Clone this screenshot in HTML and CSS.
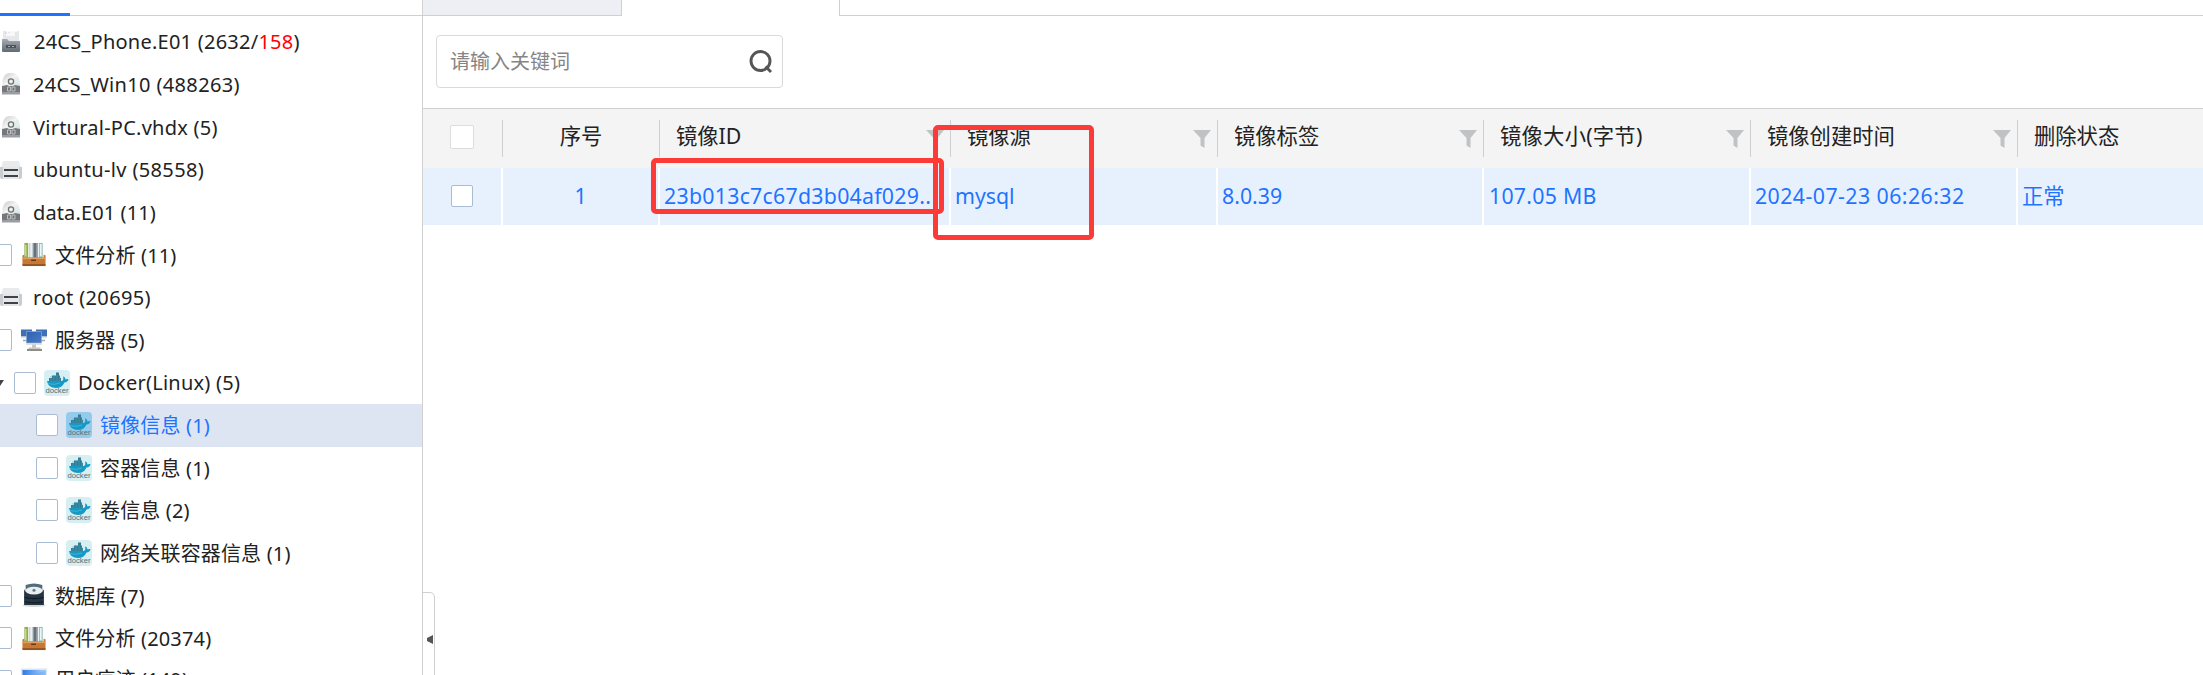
FILE: index.html
```html
<!DOCTYPE html>
<html lang="zh-CN">
<head>
<meta charset="utf-8">
<title>镜像信息</title>
<link rel="stylesheet" href="styles.css">
</head>
<body>
<svg width="0" height="0" class="defs">
  <defs>
    <linearGradient id="steel" x1="0" y1="0" x2="0" y2="1"><stop offset="0" stop-color="#a4abb1"/><stop offset="1" stop-color="#626a72"/></linearGradient>
    <linearGradient id="disc" x1="0" y1="0" x2="1" y2="1"><stop offset="0" stop-color="#c9c9c9"/><stop offset=".5" stop-color="#f4f4f4"/><stop offset="1" stop-color="#d2dcd8"/></linearGradient>
    <linearGradient id="screen" x1="0" y1="0" x2="1" y2="1"><stop offset="0" stop-color="#2c62b4"/><stop offset="1" stop-color="#4a7cc4"/></linearGradient>
    <linearGradient id="sky" x1="0" y1="0" x2="1" y2="0"><stop offset="0" stop-color="#2f7be6"/><stop offset="1" stop-color="#a9d3fa"/></linearGradient>
    <symbol id="floppy" viewBox="0 0 22 22">
      <path d="M3 0h16v11H3z" fill="#e6e8e9"/><path d="M6 0h11v5H6z" fill="#f8f8f8"/><path d="M6 1v2M9 1v1M16 1v4" stroke="#cfd2d4"/>
      <path d="M2 8h5l2 2h11v10q0 1-1 1H3q-1 0-1-1z" fill="url(#steel)"/><path d="M6 14h10v3H6z" fill="#4b535c"/><path d="M8 15.500h2M12 15.500h2" stroke="#a9b0b6"/>
    </symbol>
    <symbol id="cd" viewBox="0 0 22 22">
      <path d="M2 14Q2 4 6 1q5-2.500 10 0 4 3 4 13z" fill="url(#disc)"/><path d="M13 5l5-1 2 7-6-2z" fill="#e2efe9"/>
      <circle cx="11" cy="8.500" r="2.600" fill="#eee" stroke="#6c7074" stroke-width="1.300"/>
      <path d="M2 13l5-1 2 1h4l2-1 5 1v8H2z" fill="#74787c"/><path d="M2 19h18v2.500H2z" fill="#9a9ea2"/><path d="M7.500 14h3v4h-3zM12 14h3v4h-3z" fill="#777" stroke="#c4c6c8" stroke-width=".9"/>
    </symbol>
    <symbol id="disk" viewBox="0 0 22 22">
      <path d="M3 2h16l2 7H1z" fill="#e8eaec"/><path d="M0 8h22v10q0 2-2 2H2q-2 0-2-2z" fill="#c9cdd2"/><path d="M3 8h16v12H3z" fill="#e4e6e8"/><path d="M4 11h14M4 17h14" stroke="#3f4348" stroke-width="2.200"/>
    </symbol>
    <symbol id="files" viewBox="0 0 24 26">
      <path d="M2 1h4v16H2z" fill="#8faf4c"/><path d="M3.500 3v12" stroke="#e3edb9"/><path d="M7 1h4v16H7z" fill="#c3cccf"/><path d="M9 1v15" stroke="#f7f7f7" stroke-width="1.500"/><path d="M11 1h5v16h-5z" fill="#8c979d"/><path d="M13 1v15" stroke="#536168" stroke-width="1.400"/><path d="M17 1h4v16h-4z" fill="#8fb5b4"/><path d="M19 2v13" stroke="#ecf7f5" stroke-width="2"/>
      <path d="M0 14l2-1v3h20v-3l2 1v10H0z" fill="#c67836"/><path d="M0 17h24" stroke="#dda163" stroke-width="1.500"/><path d="M0 23h24v2H0z" fill="#96531f"/><path d="M9 19h5" stroke="#693816" stroke-width="1.500"/>
    </symbol>
    <symbol id="server" viewBox="0 0 26 24">
      <path d="M0 1h11v7H0zM15 1h11v7H15z" fill="#3f70b6"/><path d="M0 9h6M20 9h6" stroke="#dfe1e3" stroke-width="1.500"/><path d="M2 12h5M19 12h5" stroke="#a3a7aa" stroke-width="1.500"/><path d="M5.500 3h15v11.500h-15z" fill="url(#screen)" stroke="#8fa9cf" stroke-width=".7"/><path d="M5 15.500h16" stroke="#d5d7d9" stroke-width="1.500"/><path d="M11 16h4v3h4l2 3H6l2-3h3z" fill="#c9c8c5"/><path d="M6 21.500h15" stroke="#8f8d88" stroke-width="2"/>
    </symbol>
    <symbol id="whale" viewBox="0 0 26 26">
      <path d="M3 11h15q2-1 1-4.500 2 0 2.500 3 1.500-.8 3-.2-.6 3-4 3.200Q18 18 12 18q-8 0-9-7z" fill="#169ac5"/><path d="M5 8h12v3H5zM8 5.500h8v3H8zM12 2.500h3v3h-3z" fill="#347b94"/><path d="M7 6v5M10 5v6M13 5v6M16 7v4" stroke="#4baac5" stroke-width=".5"/><path d="M4 13.500q6 2 12-.5" stroke="#52bbd7" fill="none" stroke-width=".7"/>
      <text x="13" y="23" text-anchor="middle" textLength="23" lengthAdjust="spacingAndGlyphs" class="whale-word">docker</text>
    </symbol>
    <symbol id="database" viewBox="0 0 22 24">
      <ellipse cx="11" cy="21.500" rx="11" ry="1.500" fill="#d5d7d8"/><path d="M3 2q8-3 16 0v7H3z" fill="#536c7c"/><ellipse cx="11" cy="7.500" rx="8" ry="4" fill="#e9eef0"/><path d="M1.500 6q2 5 9.500 5t9.500-5v15h-19z" fill="#263541"/><path d="M2 14q9 2 18 0M2 18q9 2 18 0" stroke="#111d26" fill="none"/><circle cx="11" cy="7" r="1.500" fill="#667e8b"/>
    </symbol>
    <symbol id="desktop" viewBox="0 0 26 24"><path d="M0 0h26v20H0z" fill="#dbe5ef"/><path d="M1.500 1.500h23V20h-23z" fill="url(#sky)"/><path d="M1 9L25 2v18H1z" fill="#67a7f1" opacity=".5"/></symbol>
    <symbol id="funnel" viewBox="0 0 18 18"><path d="M0 0h18L11.500 8v10L7.500 15.500V8z" fill="#c0c2c4"/></symbol>
  </defs>
</svg>
<div class="app">
  <aside class="sidebar">
    <div class="side-tabs"><span class="side-tab"></span></div>
    <ul class="tree">
      <li class="row device"><svg class="dev"><use href="#floppy"/></svg><span class="label first">24CS_Phone.E01 (2632/<b class="alert">158</b>)</span></li>
      <li class="row device"><svg class="dev"><use href="#cd"/></svg><span class="label roomy">24CS_Win10 (488263)</span></li>
      <li class="row device"><svg class="dev"><use href="#cd"/></svg><span class="label">Virtural-PC.vhdx (5)</span></li>
      <li class="row device"><svg class="dev"><use href="#disk"/></svg><span class="label roomy">ubuntu-lv (58558)</span></li>
      <li class="row device"><svg class="dev"><use href="#cd"/></svg><span class="label snug">data.E01 (11)</span></li>
      <li class="row group"><i class="box"></i><svg class="ico"><use href="#files"/></svg><span class="label">文件分析 (11)</span></li>
      <li class="row device"><svg class="dev"><use href="#disk"/></svg><span class="label roomy">root (20695)</span></li>
      <li class="row group"><i class="box"></i><svg class="ico"><use href="#server"/></svg><span class="label">服务器 (5)</span></li>
      <li class="row sub"><svg class="caret" viewBox="0 0 4 6"><path d="M0 0h4L0 6z"/></svg><i class="box"></i><svg class="docker"><use href="#whale"/></svg><span class="label">Docker(Linux) (5)</span></li>
      <li class="row leaf selected"><i class="box"></i><svg class="docker"><use href="#whale"/></svg><span class="label">镜像信息 (1)</span></li>
      <li class="row leaf"><i class="box"></i><svg class="docker"><use href="#whale"/></svg><span class="label">容器信息 (1)</span></li>
      <li class="row leaf"><i class="box"></i><svg class="docker"><use href="#whale"/></svg><span class="label">卷信息 (2)</span></li>
      <li class="row leaf"><i class="box"></i><svg class="docker"><use href="#whale"/></svg><span class="label">网络关联容器信息 (1)</span></li>
      <li class="row group"><i class="box"></i><svg class="ico"><use href="#database"/></svg><span class="label">数据库 (7)</span></li>
      <li class="row group"><i class="box"></i><svg class="ico"><use href="#files"/></svg><span class="label">文件分析 (20374)</span></li>
      <li class="row group last"><i class="box"></i><svg class="ico"><use href="#desktop"/></svg><span class="label">用户痕迹 (149)</span></li>
    </ul>
  </aside>
  <main class="main">
    <div class="tabs"><span class="tab"></span><span class="tab active"></span><span class="tab-rest"></span></div>
    <div class="toolbar">
      <div class="search"><span class="hint">请输入关键词</span><svg class="lens" viewBox="0 0 24 24"><circle cx="11.500" cy="11" r="9.500"/><path d="M16.500 16.500l5.500 5.500"/></svg></div>
    </div>
    <div class="grid head">
      <div class="cell check"><i class="box"></i></div>
      <div class="cell num">序号</div>
      <div class="cell"><span>镜像ID</span><svg class="filter"><use href="#funnel"/></svg></div>
      <div class="cell"><span>镜像源</span><svg class="filter"><use href="#funnel"/></svg></div>
      <div class="cell"><span>镜像标签</span><svg class="filter"><use href="#funnel"/></svg></div>
      <div class="cell"><span class="size">镜像大小(字节)</span><svg class="filter"><use href="#funnel"/></svg></div>
      <div class="cell"><span>镜像创建时间</span><svg class="filter"><use href="#funnel"/></svg></div>
      <div class="cell"><span>删除状态</span></div>
    </div>
    <div class="grid data">
      <div class="cell check"><i class="box"></i></div>
      <div class="cell num">1</div>
      <div class="cell hash">23b013c7c67d3b04af029..</div>
      <div class="cell">mysql</div>
      <div class="cell">8.0.39</div>
      <div class="cell amount">107.05 MB</div>
      <div class="cell date">2024-07-23 06:26:32</div>
      <div class="cell">正常</div>
    </div>
  </main>
  <div class="collapse"><svg viewBox="0 0 6 9"><path d="M6 0v9L0 6V3z"/></svg></div>
  <div class="mark mark-id"></div>
  <div class="mark mark-source"></div>
</div>
</body>
</html>
```
FILE: styles.css
```css
* { box-sizing: border-box; }
body { margin: 0; background: #fff; color: #222; font: 20px/28px "Noto Sans", "Noto Sans CJK SC", sans-serif; }
svg { display: block; flex: none; }
.defs { position: absolute; }
.app { position: relative; display: flex; width: 2203px; height: 675px; overflow: hidden; }
.sidebar { flex: none; width: 423px; height: 675px; overflow: hidden; border-right: 1px solid #d0d0d0; }
.side-tabs { height: 16px; border-bottom: 1px solid #d0d0d0; display: flex; align-items: flex-end; }
.side-tab { width: 70px; height: 3px; margin-bottom: -1px; background: #1f74ff; }
.tree { list-style: none; margin: 0; padding: 4.600px 0 0; }
.row { display: flex; align-items: center; height: 42.600px; white-space: nowrap; }
.row.selected { background: #dce5f1; color: #1f74ff; }
.label { padding-top: 2px; letter-spacing: .16px; }
.device .label, .sub .label { padding-top: 1px; letter-spacing: .24px; }
.device .roomy { letter-spacing: .35px; }
.device .snug { letter-spacing: .12px; }
.last .label { padding-top: 0; padding-bottom: 2px; }
.alert { color: #f00; font-weight: 400; }
.dev { width: 22px; height: 22px; margin-right: 11px; }
.first { margin-left: 1px; }
.box { flex: none; width: 22px; height: 22px; border: 1px solid #a9bcd4; border-radius: 2px; background: #fff; }
.group .box { margin-left: -10px; }
.group .ico { width: 26px; height: 25px; margin: 0 8px 0 9px; }
.caret { width: 4px; height: 6px; margin-right: 10px; fill: #444; }
.docker { width: 26px; height: 26px; border-radius: 4px; background: #d6eff3; margin: 0 8px; }
.leaf .box { margin-left: 36px; }
.selected .docker { background: #94caec; }
.whale-word { font: 7px "Liberation Sans", sans-serif; fill: #526f7b; }
.main { flex: 1; min-width: 0; }
.tabs { height: 16px; display: flex; }
.tab { width: 199px; background: #eeeff4; border-right: 1px solid #d0d0d0; border-bottom: 1px solid #d0d0d0; }
.tab.active { width: 218px; background: #fff; border-bottom: 0; }
.tab-rest { flex: 1; border-bottom: 1px solid #d0d0d0; }
.toolbar { height: 92px; padding: 19px 13px; }
.search { width: 347px; height: 53px; border: 1px solid #d9d9d9; border-radius: 4px; display: flex; align-items: center; justify-content: space-between; padding: 0 9px 0 13px; }
.hint { color: #858585; padding-top: 1px; }
.lens { width: 24px; height: 24px; fill: none; stroke: #555; stroke-width: 2.900; }
.grid { display: grid; grid-template-columns: 80px 157px 291px 267px 266px 267px 267px 1fr; font-size: 21.300px; }
.head { height: 60px; background: #f4f4f4; border-top: 1px solid #d0d0d0; padding-top: 11px; }
.head .cell { height: 37px; display: flex; align-items: center; justify-content: space-between; padding: 0 6px 6px 16px; border-right: 1px solid #d0d0d0; white-space: nowrap; }
.head .cell:last-child { border-right: 0; }
.size { letter-spacing: .25px; }
.filter { width: 18px; height: 18px; margin-top: 7px; }
.data { height: 57px; color: #1f74ff; }
.data .cell { display: flex; align-items: center; padding: 0 0 1px 4px; background: #e7f1fe; border-right: 2px solid #fff; min-width: 0; white-space: nowrap; }
.data .cell:last-child { border-right: 0; }
.data .hash { letter-spacing: .27px; }
.data .date { letter-spacing: .44px; }
.data .amount { letter-spacing: .25px; padding-left: 5px; }
.grid .check { justify-content: center; padding: 0 1px 1px 0; }
.grid .num { justify-content: center; padding-left: 0; padding-right: 0; }
.head .check { padding-bottom: 3px; }
.head .check .box { width: 24px; height: 24px; border-color: #ddd; }
.collapse { position: absolute; left: 422px; top: 592px; width: 13px; height: 95px; border: 1px solid #d0d0d0; border-radius: 0 5px 5px 0; background: #fff; }
.collapse svg { width: 6px; height: 9px; margin: 42px 0 0 4px; fill: #555; }
.mark { position: absolute; border: 5px solid #fc3a38; border-radius: 5px; }
.mark-id { left: 651px; top: 158px; width: 293px; height: 56px; }
.mark-source { left: 933px; top: 125px; width: 161px; height: 115px; }
```
